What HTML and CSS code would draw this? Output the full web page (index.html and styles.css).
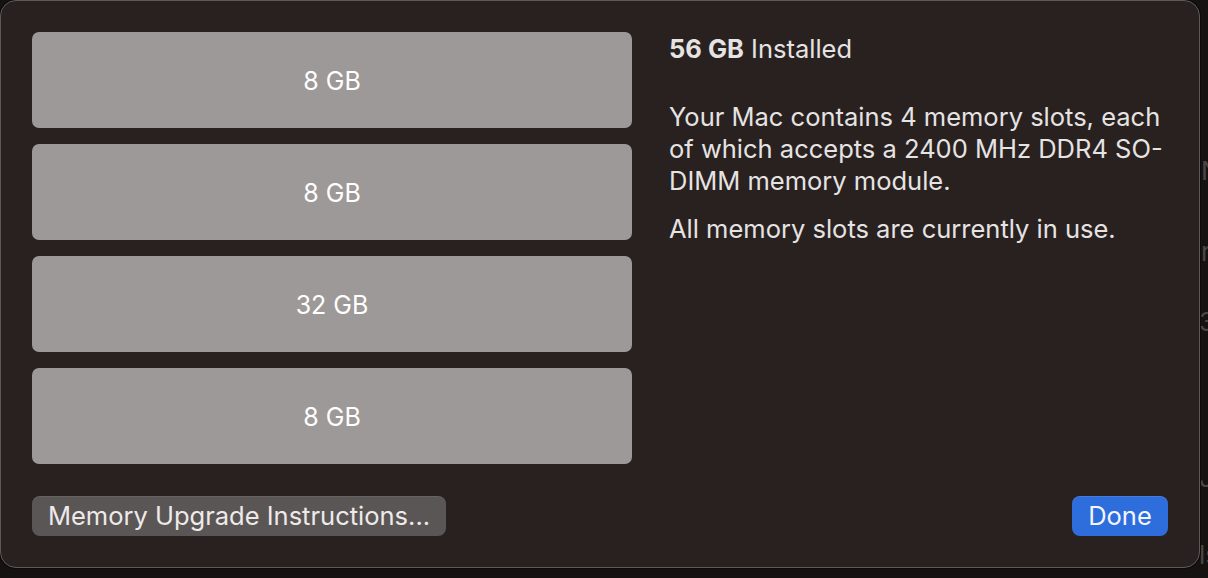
FILE: index.html
```html
<!DOCTYPE html>
<html lang="en">
<head>
<meta charset="utf-8">
<title>Memory</title>
<link rel="stylesheet" href="styles.css">
</head>
<body>
<div class="backdrop">
  <span class="ghost g1">N</span>
  <span class="ghost g2">r</span>
  <span class="ghost g3">3</span>
  <span class="ghost g4">J</span>
  <span class="ghost g5">ls</span>
</div>
<div class="dialog">
  <div class="content">
    <div class="slots">
      <div class="slot">8 GB</div>
      <div class="slot">8 GB</div>
      <div class="slot">32 GB</div>
      <div class="slot">8 GB</div>
    </div>
    <div class="info">
      <p class="installed"><b>56 GB</b> Installed</p>
      <p class="desc">Your Mac contains 4 memory slots, each of which accepts a 2400 MHz DDR4 SO-DIMM memory module.</p>
      <p class="desc second">All memory slots are currently in use.</p>
    </div>
  </div>
  <div class="actions">
    <button class="btn secondary">Memory Upgrade Instructions...</button>
    <button class="btn primary">Done</button>
  </div>
</div>
</body>
</html>
```

FILE: styles.css
```css
* { box-sizing: border-box; }
html, body {
  margin: 0;
  padding: 0;
  width: 1208px;
  height: 578px;
  overflow: hidden;
  background: #141111;
  font-family: Inter, "Liberation Sans", sans-serif;
}
body { position: relative; }
.backdrop {
  position: absolute;
  inset: 0;
  background: #161212;
}
.ghost {
  position: absolute;
  color: #4a4646;
  font-size: 26px;
}
.g1 { left: 1201px; top: 155px; }
.g2 { left: 1201px; top: 236px; }
.g3 { left: 1199px; top: 306px; }
.g4 { left: 1199px; top: 462px; }
.g5 { left: 1199px; top: 539px; }
.dialog {
  position: relative;
  width: 1200px;
  height: 568px;
  background: #282120;
  border: 1px solid #5e5a5a;
  border-radius: 16px;
  box-shadow: 0 0 0 1px #0c0a0a;
  padding: 31px;
  display: flex;
  flex-direction: column;
  justify-content: space-between;
}
.content {
  display: flex;
  gap: 37px;
}
.slots {
  width: 600px;
  display: flex;
  flex-direction: column;
  gap: 16px;
  flex: none;
}
.slot {
  height: 96px;
  background: #9d9998;
  border-radius: 7px;
  color: #ffffff;
  font-size: 25px;
  display: flex;
  align-items: center;
  justify-content: center;
  padding-top: 2px;
}
.info {
  color: #e6e3e3;
  font-size: 25.5px;
  width: 508px;
  flex: none;
  padding-top: 1px;
}
.info p { margin: 0; }
.installed {
  line-height: 32px;
}
.installed b { font-weight: 700; }
.desc {
  line-height: 32px;
  margin-top: 36px !important;
}
.desc.second { margin-top: 16px !important; }
.actions {
  display: flex;
  justify-content: space-between;
  align-items: center;
}
.btn {
  height: 40px;
  border: none;
  border-radius: 8px;
  font-family: Inter, "Liberation Sans", sans-serif;
  font-size: 25.5px;
  color: #eeeaea;
  padding: 0 0 2px 0;
  white-space: nowrap;
}
.secondary {
  background: #5b5656;
  width: 414px;
  box-shadow: inset 0 1px 0 rgba(255,255,255,0.08);
}
.primary {
  background: #2d6ddc;
  width: 96px;
  color: #f3f6ff;
  box-shadow: inset 0 1px 0 rgba(255,255,255,0.12);
}
```
